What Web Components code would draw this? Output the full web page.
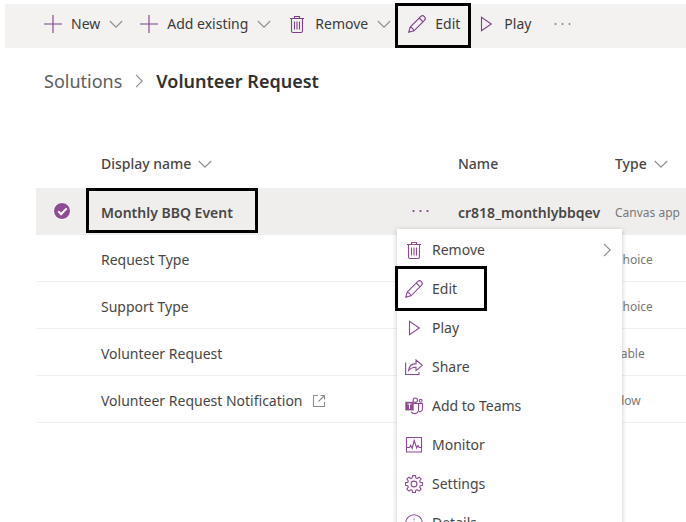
<!DOCTYPE html>
<html lang="en">
<head>
<meta charset="utf-8">
<title>Solutions - Volunteer Request</title>
<style>
  body {
    margin: 0;
    min-height: 100vh;
    overflow: hidden;
    background: #fff;
    color: #3b3a39;
    font: 14px/20px "Noto Sans", "Open Sans", sans-serif;
    --accent: #7d3f86;
    --bar: #f3f2f1;
    --line: #f0f0f0;
  }
</style>
</head>
<body>
<solution-page></solution-page>
<script>
const ICONS = {
  plus: '<path d="M9 0v18M0 9h18"/>',
  trash: '<path d="M2 3.500h14M6.500 3.500v-2h5v2M3.500 3.500v12.500q0 1.500 1.500 1.500h8q1.500 0 1.500-1.500v-12.500M6.500 6.500v8M9 6.500v8M11.500 6.500v8"/>',
  pencil: '<path d="M.7 17.300l1.500-5.300L12.600 1.600a2.600 2.600 0 0 1 3.800 3.800L6 15.800zM2.200 12q3 .8 3.800 3.800M11.200 3l3.800 3.800M.9 16l1.200 1.200"/>',
  play: '<path d="M4.500 2.300v13.400L14.300 9z"/>',
  share: '<path d="M.6 4.500v12h13.400v-2.500M3.500 12.500c.5-4.600 3-6.700 7.500-6.900V2L17.300 7.300 11 12.600v-3.400c-3.500 0-5.600.8-7.500 3.300z"/>',
  teams: '<circle cx="10.300" cy="3.200" r="2.200"/><circle cx="15.700" cy="3.800" r="1.400"/><path d="M8.500 6.500h5v7.200a4 4 0 0 1-7.300 1M13.500 6.500h3.900v5.500a2.600 2.600 0 0 1-3.500 2.500"/><path d="M.3 4.800h8.400v8.600H.3z" fill="currentColor" stroke="none"/><path d="M2.500 7h4M4.500 7v4.800" stroke="#fff"/>',
  monitor: '<path d="M1.500 1.500h15v14.500h-15zM1.500 11.500h3l1.200-2 1.500 3L9.200 4.500l2.500 7.500 1.300-2.500 1.200 2h2.300"/>',
  gear: '<circle cx="9" cy="9" r="2.900"/><path d="M7.600.6h2.800l.4 2.300 1.400.6 1.900-1.400 2 2-1.400 1.900.6 1.400 2.200.3v2.700l-2.200.4-.6 1.400 1.400 1.900-2 2-1.900-1.400-1.400.6-.4 2.200H7.600l-.4-2.200-1.400-.6-1.900 1.400-2-2 1.400-1.900-.6-1.400-2.200-.4V7.700l2.200-.3.600-1.400-1.400-1.900 2-2 1.900 1.400 1.400-.6z"/>',
  info: '<circle cx="9" cy="9" r="8.200"/><path d="M9 7.500v6M9 4.500v1.200"/>',
  more: '<g fill="currentColor" stroke="none"><circle cx="1.500" cy="9" r="1.100"/><circle cx="8.500" cy="9" r="1.100"/><circle cx="15.500" cy="9" r="1.100"/></g>',
  down: '<path d="M2.800 6l6.200 6.200L15.200 6"/>',
  right: '<path d="M6 2.800L12.200 9 6 15.200"/>',
  popout: '<path d="M8 3.500H3.500v11h11V10M10.500 3.500h4v4M14.500 3.500L8.500 9.500"/>'
};

class UiIcon extends HTMLElement {
  constructor() { super(); this.attachShadow({ mode: "open" }); }
  connectedCallback() {
    this.shadowRoot.innerHTML = `
      <style>
        :host { display: inline-flex; flex: none; width: 18px; height: 18px; color: var(--accent); }
        :host([tone="muted"]) { color: #8f8d8b; }
        svg { width: 100%; height: 100%; fill: none; stroke: currentColor; stroke-width: 1.1; overflow: visible; }
      </style>
      <svg viewBox="0 0 18 18" aria-hidden="true">${ICONS[this.getAttribute("name")]}</svg>`;
  }
}
customElements.define("ui-icon", UiIcon);

/* Black frame drawn over whatever is slotted in. */
class FocusFrame extends HTMLElement {
  constructor() {
    super();
    this.attachShadow({ mode: "open" }).innerHTML = `
      <style>
        :host { display: inline-flex; position: relative; }
        :host::after { content: ""; position: absolute; inset: var(--frame, 0); border: 3px solid #000; pointer-events: none; }
      </style><slot></slot>`;
  }
}
customElements.define("focus-frame", FocusFrame);

class CommandButton extends HTMLElement {
  constructor() { super(); this.attachShadow({ mode: "open" }); }
  connectedCallback() {
    const arrow = this.hasAttribute("menu") ? '<ui-icon class="arrow" name="down" tone="muted"></ui-icon>' : "";
    this.shadowRoot.innerHTML = `
      <style>
        :host { display: inline-flex; }
        button { display: flex; align-items: center; gap: 9px; height: 40px; padding: 0; border: 0; background: none; color: inherit; font: inherit; white-space: nowrap; }
        .arrow { margin: 0 -2px; }
      </style>
      <button type="button"><ui-icon name="${this.getAttribute("icon")}"></ui-icon><slot></slot>${arrow}</button>`;
  }
}
customElements.define("command-button", CommandButton);

class CommandBar extends HTMLElement {
  constructor() {
    super();
    this.attachShadow({ mode: "open" }).innerHTML = `
      <style>
        :host { display: flex; gap: 17px; padding-bottom: 4px; margin: 4px 0 0 5px; padding-left: 39px; background: var(--bar); }
        focus-frame { --frame: -1px -11px -4px -13px; }
        button { display: flex; align-items: center; padding: 0; border: 0; margin-left: 6px; background: none; }
      </style>
      <command-button icon="plus" menu>New</command-button>
      <command-button icon="plus" menu>Add existing</command-button>
      <command-button icon="trash" menu>Remove</command-button>
      <focus-frame><command-button icon="pencil">Edit</command-button></focus-frame>
      <command-button icon="play">Play</command-button>
      <button type="button" aria-label="More commands"><ui-icon name="more" tone="muted"></ui-icon></button>`;
  }
}
customElements.define("command-bar", CommandBar);

class BreadCrumb extends HTMLElement {
  constructor() {
    super();
    this.attachShadow({ mode: "open" }).innerHTML = `
      <style>
        :host { display: block; padding: 19px 44px 0; font-size: 18px; line-height: 28px; }
        nav { display: flex; align-items: center; gap: 8px; }
        a { color: #605e5c; text-decoration: none; }
        h1 { margin: 0; font: inherit; font-weight: 600; color: #323130; }
      </style>
      <nav aria-label="Breadcrumb"><a href="#">Solutions</a><ui-icon name="right" tone="muted"></ui-icon><h1>Volunteer Request</h1></nav>`;
  }
}
customElements.define("bread-crumb", BreadCrumb);

class MenuEntry extends HTMLElement {
  constructor() { super(); this.attachShadow({ mode: "open" }); }
  connectedCallback() {
    const arrow = this.hasAttribute("submenu") ? '<ui-icon class="arrow" name="right" tone="muted"></ui-icon>' : "";
    this.shadowRoot.innerHTML = `
      <style>
        :host { display: block; }
        button { display: flex; align-items: center; gap: 9px; width: 100%; height: 39px; padding: 0 6px 0 8px; border: 0; background: none; color: inherit; font: inherit; text-align: left; white-space: nowrap; }
        .arrow { margin-left: auto; }
      </style>
      <button type="button" role="menuitem"><ui-icon name="${this.getAttribute("icon")}"></ui-icon><slot></slot>${arrow}</button>`;
  }
}
customElements.define("menu-entry", MenuEntry);

class ContextMenu extends HTMLElement {
  constructor() {
    super();
    this.attachShadow({ mode: "open" }).innerHTML = `
      <style>
        :host { display: flex; flex-direction: column; padding: 1px 0; background: #fff; box-shadow: 0 1px 5px rgba(0,0,0,.22); color: #484644; --accent: #8c4a94; }
      </style><slot></slot>`;
  }
  connectedCallback() { this.setAttribute("role", "menu"); }
}
customElements.define("context-menu", ContextMenu);

class ComponentTable extends HTMLElement {
  constructor() {
    super();
    const rows = [["Request Type", "Choice"], ["Support Type", "Choice"], ["Volunteer Request", "Table"], ["Volunteer Request Notification", "Flow", true]];
    this.attachShadow({ mode: "open" }).innerHTML = `
      <style>
        :host { display: block; margin: 45px 0 0 36px; }
        table { width: 100%; table-layout: fixed; border-collapse: separate; border-spacing: 0; }
        .pick { width: 57px; } .dots { width: 60px; } .name { width: 157px; } .type { width: 79px; }
        th, td { box-sizing: border-box; height: 47px; padding: 3px 8px 0; text-align: left; font-weight: 400; white-space: nowrap; border-bottom: 1px solid var(--line); }
        thead th { height: 48px; padding-top: 0; border: 0; font-weight: 500; color: #484644; }
        tbody { color: #484644; }
        .head { display: inline-flex; align-items: center; gap: 5px; padding: 0; border: 0; background: none; color: inherit; font: inherit; }
        .label { display: flex; align-items: center; gap: 7px; }
        .selected > * { background: #efeeed; border-color: #efeeed; }
        .selected th, .selected .id { font-weight: 600; }
        td.kind { padding-right: 0; font-size: 12px; color: #797775; }
        td.pickcell { padding: 0 0 0 17px; }
        input { appearance: none; display: grid; place-items: center; width: 18px; height: 18px; margin: 0; border: 1px solid #fff; border-radius: 50%; background: #8f4b93; }
        input::after { content: ""; width: 7px; height: 3px; border: solid #fff; border-width: 0 0 2px 2px; transform: translateY(-1px) rotate(-45deg); }
        td.actions { position: relative; padding-top: 0; }
        .actions > button { display: flex; padding: 0 0 0 14px; border: 0; background: none; }
        context-menu { position: absolute; z-index: 2; left: 7px; top: 41px; width: 225px; }
        th focus-frame { --frame: -15px -25px -10px -15px; }
        context-menu focus-frame { --frame: -3px 135px -3px -2px; display: block; }
      </style>
      <table>
        <colgroup><col class="pick"><col><col class="dots"><col class="name"><col class="type"></colgroup>
        <thead><tr>
          <th></th>
          <th scope="col"><button class="head" type="button">Display name<ui-icon name="down" tone="muted"></ui-icon></button></th>
          <th></th>
          <th scope="col">Name</th>
          <th scope="col"><button class="head" type="button">Type<ui-icon name="down" tone="muted"></ui-icon></button></th>
        </tr></thead>
        <tbody>
          <tr class="selected">
            <td class="pickcell"><input type="checkbox" checked aria-label="Select Monthly BBQ Event"></td>
            <th scope="row"><focus-frame>Monthly BBQ Event</focus-frame></th>
            <td class="actions">
              <button type="button" aria-label="More actions"><ui-icon name="more"></ui-icon></button>
              <context-menu>
                <menu-entry icon="trash" submenu>Remove</menu-entry>
                <focus-frame><menu-entry icon="pencil">Edit</menu-entry></focus-frame>
                <menu-entry icon="play">Play</menu-entry>
                <menu-entry icon="share">Share</menu-entry>
                <menu-entry icon="teams">Add to Teams</menu-entry>
                <menu-entry icon="monitor">Monitor</menu-entry>
                <menu-entry icon="gear">Settings</menu-entry>
                <menu-entry icon="info">Details</menu-entry>
              </context-menu>
            </td>
            <td class="id">cr818_monthlybbqev</td>
            <td class="kind">Canvas app</td>
          </tr>
          ${rows.map(([name, kind, link]) => `<tr>
            <td></td>
            <th scope="row"><span class="label">${name}${link ? '<ui-icon name="popout" tone="muted"></ui-icon>' : ""}</span></th>
            <td></td><td></td><td class="kind">${kind}</td>
          </tr>`).join("")}
        </tbody>
      </table>`;
  }
}
customElements.define("component-table", ComponentTable);

class SolutionPage extends HTMLElement {
  constructor() {
    super();
    this.attachShadow({ mode: "open" }).innerHTML = `
      <style>:host { display: flow-root; }</style>
      <command-bar></command-bar>
      <bread-crumb></bread-crumb>
      <component-table></component-table>`;
  }
}
customElements.define("solution-page", SolutionPage);
</script>
</body>
</html>
